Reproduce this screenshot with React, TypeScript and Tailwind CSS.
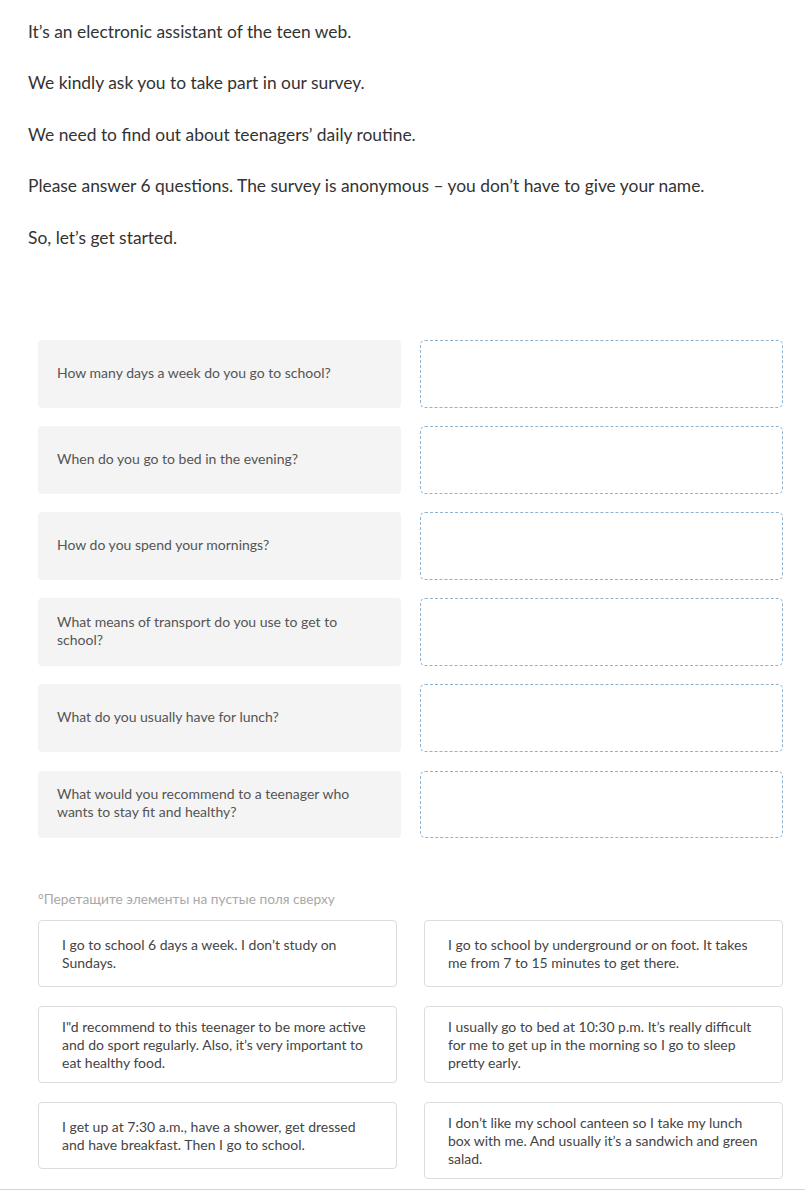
import React from 'react';

const intro = [
  'It’s an electronic assistant of the teen web.',
  'We kindly ask you to take part in our survey.',
  'We need to find out about teenagers’ daily routine.',
  'Please answer 6 questions. The survey is anonymous – you don’t have to give your name.',
  'So, let’s get started.',
];

const questions = [
  'How many days a week do you go to school?',
  'When do you go to bed in the evening?',
  'How do you spend your mornings?',
  'What means of transport do you use to get to school?',
  'What do you usually have for lunch?',
  'What would you recommend to a teenager who wants to stay fit and healthy?',
];

const answers = [
  'I go to school 6 days a week. I don’t study on Sundays.',
  'I go to school by underground or on foot. It takes me from 7 to 15 minutes to get there.',
  'I"d recommend to this teenager to be more active and do sport regularly. Also, it’s very important to eat healthy food.',
  'I usually go to bed at 10:30 p.m. It’s really difficult for me to get up in the morning so I go to sleep pretty early.',
  'I get up at 7:30 a.m., have a shower, get dressed and have breakfast. Then I go to school.',
  'I don’t like my school canteen so I take my lunch box with me. And usually it’s a sandwich and green salad.',
];

export default function App() {
  return (
    <div className="w-[805px] h-[1192px] bg-white overflow-hidden font-['Lato',sans-serif]">
      {/* Intro */}
      <div className="pl-[28px] pt-[20px] flex flex-col gap-[27px] text-[17.4px] leading-[24.4px] text-[#333]">
        {intro.map((line) => (
          <p key={line}>{line}</p>
        ))}
      </div>

      {/* Questions + drop zones */}
      <div className="mt-[90px] pl-[38px] pr-[22px] grid grid-cols-2 gap-x-[19px] gap-y-[18.6px]">
        {questions.map((q) => (
          <React.Fragment key={q}>
            <div className="h-[67.5px] bg-[#f4f4f4] rounded-[4px] flex items-center pl-[19px] pr-[40px] pb-[2px] text-[14px] leading-[18px] text-[#555]">
              {q}
            </div>
            <div className="h-[67.5px] rounded-[5px] border border-dashed border-[#8fb3cf]" />
          </React.Fragment>
        ))}
      </div>

      {/* Hint */}
      <p className="mt-[53px] pl-[38px] text-[13.7px] leading-[16px] text-[#a8a8a8]">
        °Перетащите элементы на пустые поля сверху
      </p>

      {/* Draggable answers */}
      <div className="mt-[13px] pl-[38px] pr-[22px] grid grid-cols-2 gap-x-[27px] gap-y-[19px] items-start">
        {answers.map((a) => (
          <div
            key={a}
            className="min-h-[67px] border border-[#dcdcdc] rounded-[4px] flex items-center pl-[23px] pr-[18px] py-[10.5px] text-[14px] leading-[18px] text-[#444]"
          >
            {a}
          </div>
        ))}
      </div>

      <div className="mt-[10px] border-t border-[#d4d4d4]" />
    </div>
  );
}
